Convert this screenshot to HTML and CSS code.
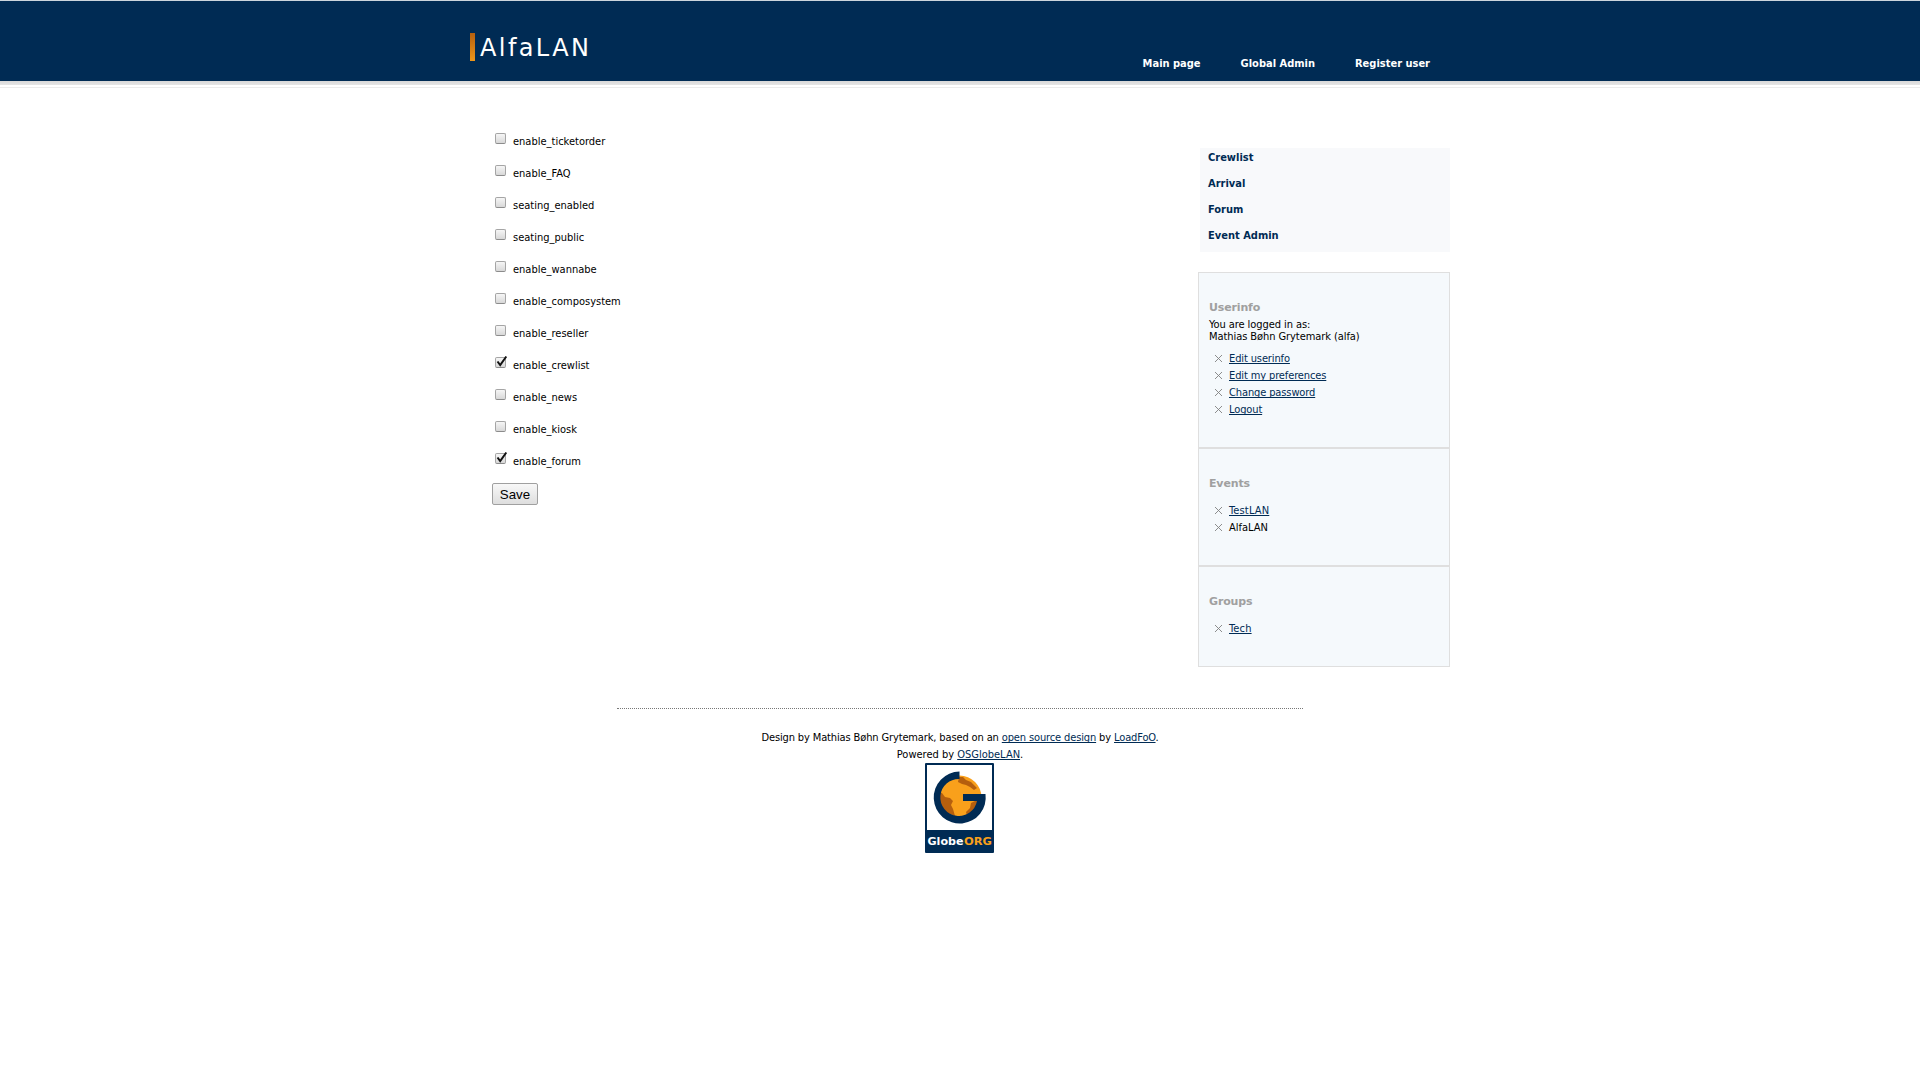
FILE: index.html
```html
<!DOCTYPE html>
<html lang="en">
<head>
<meta charset="utf-8">
<title>AlfaLAN</title>
<link rel="stylesheet" href="styles.css">
</head>
<body>
<header class="header">
  <div class="header-inner">
    <h1 class="brand"><span>AlfaLAN</span></h1>
    <nav class="topnav">
      <a>Main page</a><a>Global Admin</a><a>Register user</a>
    </nav>
  </div>
</header>
<div class="header-edge"></div>
<main class="content">
  <form class="settings">
    <label class="option"><span class="box"></span><span>enable_ticketorder</span></label>
    <label class="option"><span class="box"></span><span>enable_FAQ</span></label>
    <label class="option"><span class="box"></span><span>seating_enabled</span></label>
    <label class="option"><span class="box"></span><span>seating_public</span></label>
    <label class="option"><span class="box"></span><span>enable_wannabe</span></label>
    <label class="option"><span class="box"></span><span>enable_composystem</span></label>
    <label class="option"><span class="box"></span><span>enable_reseller</span></label>
    <label class="option"><span class="box"><svg class="tick" viewBox="0 0 12 12"><path d="M2.500 5.500L5.200 9L11.300 0.500"/></svg></span><span>enable_crewlist</span></label>
    <label class="option"><span class="box"></span><span>enable_news</span></label>
    <label class="option"><span class="box"></span><span>enable_kiosk</span></label>
    <label class="option"><span class="box"><svg class="tick" viewBox="0 0 12 12"><path d="M2.500 5.500L5.200 9L11.300 0.500"/></svg></span><span>enable_forum</span></label>
    <button class="save" type="button">Save</button>
  </form>
  <aside class="sidebar">
    <nav class="sidenav">
      <a>Crewlist</a><a>Arrival</a><a>Forum</a><a>Event Admin</a>
    </nav>
    <section class="panel panel-user">
      <h2>Userinfo</h2>
      <p>You are logged in as:<br>Mathias Bøhn Grytemark (alfa)</p>
      <ul>
        <li><svg class="x" viewBox="0 0 7 7"><path d="M0 0L7 7M7 0L0 7"/></svg><a>Edit userinfo</a></li>
        <li><svg class="x" viewBox="0 0 7 7"><path d="M0 0L7 7M7 0L0 7"/></svg><a>Edit my preferences</a></li>
        <li><svg class="x" viewBox="0 0 7 7"><path d="M0 0L7 7M7 0L0 7"/></svg><a>Change password</a></li>
        <li><svg class="x" viewBox="0 0 7 7"><path d="M0 0L7 7M7 0L0 7"/></svg><a>Logout</a></li>
      </ul>
    </section>
    <section class="panel panel-events">
      <h2>Events</h2>
      <ul>
        <li><svg class="x" viewBox="0 0 7 7"><path d="M0 0L7 7M7 0L0 7"/></svg><a class="wide">TestLAN</a></li>
        <li><svg class="x" viewBox="0 0 7 7"><path d="M0 0L7 7M7 0L0 7"/></svg><span>AlfaLAN</span></li>
      </ul>
    </section>
    <section class="panel panel-groups">
      <h2>Groups</h2>
      <ul>
        <li><svg class="x" viewBox="0 0 7 7"><path d="M0 0L7 7M7 0L0 7"/></svg><a class="wide">Tech</a></li>
      </ul>
    </section>
  </aside>
</main>
<footer class="footer">
  <p class="credits">Design by Mathias Bøhn Grytemark, based on an <a>open source design</a> by <a>LoadFoO</a>.</p>
  <p>Powered by <a>OSGlobeLAN</a>.</p>
  <svg class="logo" width="69" height="90" viewBox="0 0 69 90">
    <rect width="69" height="90" rx="1" fill="#002b54"/>
    <rect x="2" y="2" width="65" height="65" fill="#fff"/>
    <circle cx="34.500" cy="34.500" r="22" fill="#f9a01b"/>
    <path d="M14 29L17 30L20 34L25 35L28 38L26 42L28 46L30 53L20 49L14 40Z M34 14L38 14L41 17L46 19L52 25L49 27L45 24L41 22L37 21L33 19Z M50 38H54L50 47L42 53L41 49L45 45L46 40Z" fill="#b55f0e"/>
    <path d="M34.500 8.500A26 26 0 1 0 60.500 31H38V38H52A18.500 18.500 0 1 1 34.500 16Z" fill="#002b54"/>
    <text x="2.500" y="81.500" textLength="36" lengthAdjust="spacingAndGlyphs" class="logo-text" fill="#fff">Globe</text>
    <text x="39" y="81.500" textLength="28" lengthAdjust="spacingAndGlyphs" class="logo-text" fill="#f9a01b">ORG</text>
  </svg>
</footer>
</body>
</html>
```
FILE: styles.css
```css
* { box-sizing: border-box; }
body {
  margin: 0;
  background: #fff;
  color: #000;
  font: 11px/12px "DejaVu Sans Condensed", "DejaVu Sans", sans-serif;
}
h1, h2, p, ul { margin: 0; padding: 0; }
a { color: #002b54; }

.header { height: 81px; background: #002b54; border-top: 1px solid #ccd5dd; }
.header-inner {
  width: 980px; height: 80px; margin: 0 auto;
  display: flex; justify-content: space-between; align-items: flex-start;
}
.header-edge {
  height: 7px;
  background: linear-gradient(#d8d8d8, #e6e6e6 60%, #fff 60%, #fff 85%, #ececec 85%);
}
.brand {
  display: flex; margin-top: 32px;
  font: 24px/28px "DejaVu Sans", sans-serif;
  letter-spacing: 2.4px; color: #fff;
}
.brand::before {
  content: ""; width: 5px; height: 28px; margin-right: 5px;
  background: linear-gradient(#b5600f, #ee961a);
}
.brand span { padding-top: 1px; }
.topnav { display: flex; gap: 40px; margin: 56px 20px 0 0; }
.topnav a { color: #fff; font: bold 11px/14px "DejaVu Sans Condensed", "DejaVu Sans", sans-serif; }

.content {
  width: 980px; margin: 0 auto; height: 580px;
  display: flex; justify-content: space-between;
}
.settings { padding: 37px 0 0 22px; }
.option { display: flex; height: 32px; padding: 8px 0 0 3px; align-items: flex-start; }
.option span:last-child { margin: 3px 0 0 7px; }
.box {
  width: 11px; height: 11px;
  border: 1px solid #a5a5a5; border-bottom-color: #8c8c8c; border-radius: 2px;
  background: linear-gradient(#f6f6f6, #d8d8d8);
}
.tick { display: block; width: 12px; height: 12px; margin: -2px 0 0 -1px; overflow: visible; }
.tick path { fill: none; stroke: #111; stroke-width: 2; }
.save {
  display: block; width: 46px; height: 22px; margin-top: 6px; padding: 1px 0 0;
  border: 1px solid #a0a0a0; border-radius: 2px;
  background: linear-gradient(#f8f8f8, #dedede);
  font: 13.3px/19px "Liberation Sans", Arial, sans-serif; color: #000;
}

.sidebar { width: 252px; padding-top: 60px; }
.sidenav {
  display: flex; flex-direction: column;
  height: 104px; margin: 0 0 20px 2px; padding-left: 8px; background: #f8f9fb;
}
.sidenav a { height: 26px; font-weight: bold; line-height: 20px; }
.panel { border: 1px solid #dfdfdf; background: #f5f9fc; padding: 28px 10px 0; }
.panel-user { height: 176px; }
.panel-events { height: 118px; }
.panel-groups { height: 101px; }
.panel h2 { font: bold 11px/14px "DejaVu Sans", sans-serif; letter-spacing: -0.15px; color: #a0a0a0; }
.panel p { margin-top: 4px; letter-spacing: -0.07px; }
.panel ul { list-style: none; margin-top: 11px; }
.panel-user ul { margin-top: 7px; }
.panel-user li { letter-spacing: -0.12px; }
.panel li { display: flex; align-items: center; height: 17px; padding-left: 6px; }
.panel li a, .footer a {
  text-decoration: underline 1px; text-underline-offset: 1px; text-decoration-skip-ink: none;
}
.panel li .wide { letter-spacing: 0.15px; }
.x { width: 7px; height: 7px; margin-right: 7px; }
.x path { fill: none; stroke: #808080; stroke-width: 0.9; }

.footer {
  width: 686px; margin: 40px auto 0; padding-top: 20px;
  border-top: 1px dotted #777; text-align: center;
}
.footer p { line-height: 17px; }
.footer .credits { letter-spacing: -0.13px; }
.logo { display: block; margin: 0 0 0 308px; }
.logo-text { font: bold 11px "DejaVu Sans", sans-serif; }
```
